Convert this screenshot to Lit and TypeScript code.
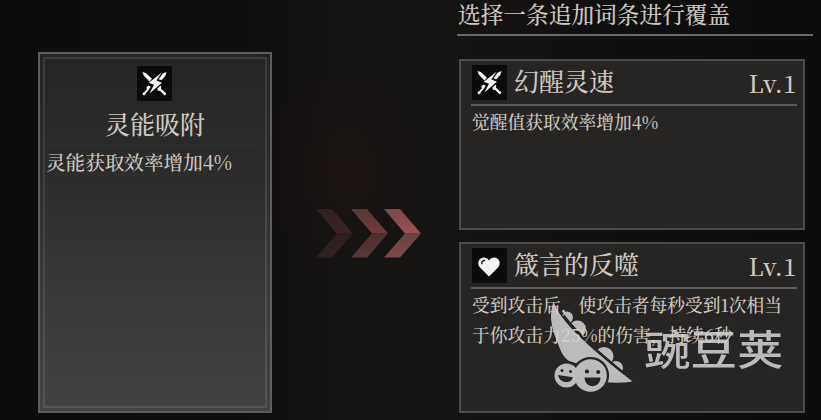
import { LitElement, css, html, svg } from "lit";
import { customElement, property } from "lit/decorators.js";

const swords = svg`
  <path d="M5.4 6 L8.8 7 L15 12.8 L12.4 15.4 L6.8 9.4 Z" />
  <path d="M29.6 6 L28.4 9.8 L24.4 14.2 L21.6 13.2 L25.8 7.6 Z" />
  <path d="M24.6 6.8 L11.8 16.8 L17 18.8 L12.4 27.6 L25 16.8 L19.4 14.6 Z" />
  <path d="M20.4 22.6 L23.4 19.8 L24.2 20.4 L24 22.8 L28 26.2 A1.5 1.5 0 1 1 26.2 28 L23 24.8 L21 25 Z" />
  <path d="M11.2 19.6 L13.8 20.8 L11.4 24.2 L8.6 27.4 A1.5 1.5 0 1 1 7 26.2 L9.8 23.4 L9.4 21.2 Z" />
`;

const heart = svg`
  <path d="M17 28.4 L8.2 19.8 C3.8 14.6 7.8 8.8 12.4 9.5 C14.6 9.8 16.1 11 17 12.4 C17.9 11 19.4 9.8 21.6 9.5 C26.2 8.8 30.2 14.6 25.8 19.8 Z" />
  <path class="shine" d="M9.8 16.2 C9.5 13.6 11 12.2 13.2 12.4" />
`;

@customElement("entry-icon")
export class EntryIcon extends LitElement {
  static styles = css`
    :host {
      display: block;
      width: 35px;
      height: 35px;
      background: #0b0b0b;
    }

    svg {
      display: block;
      fill: #f4f4f4;
    }

    .shine {
      fill: none;
      stroke: #0b0b0b;
      stroke-width: 1.3;
    }
  `;

  @property()
  name: string = "swords";

  render() {
    return html`
      <svg width="35" height="35" viewBox="0 0 35 35">
        ${this.name === "heart" ? heart : swords}
      </svg>
    `;
  }
}

@customElement("entry-card")
export class EntryCard extends LitElement {
  static styles = css`
    :host {
      display: block;
      box-sizing: border-box;
      border: 2px solid #4c4b4a;
      background: #272524;
      padding: 4px 6px 0 10px;
    }

    .head {
      display: flex;
      height: 41px;
      box-sizing: border-box;
      border-bottom: 2px solid #5d5b59;
    }

    .head entry-icon {
      margin-left: 1px;
    }

    .title {
      flex: 1;
      margin-left: 7px;
      font-size: 25px;
      line-height: 31px;
    }

    .level {
      font-size: 24px;
      line-height: 35px;
      letter-spacing: 0.5px;
    }

    .text {
      padding: 1px 0 0 1px;
      font-size: 17.75px;
      line-height: 30px;
      white-space: nowrap;
    }
  `;

  @property()
  icon: string = "swords";
  @property()
  heading: string = "";

  render() {
    return html`
      <div class="head">
        <entry-icon name=${this.icon}></entry-icon>
        <div class="title">${this.heading}</div>
        <div class="level">Lv.1</div>
      </div>
      <div class="text"><slot></slot></div>
    `;
  }
}

@customElement("app-root")
export class AppRoot extends LitElement {
  static styles = css`
    :host {
      display: block;
      position: relative;
      width: 821px;
      height: 420px;
      overflow: hidden;
      color: #cdc7bf;
      font-family: "Noto Serif CJK SC", "Noto Sans CJK SC", serif;
      font-weight: 500;
      background: radial-gradient(
          ellipse 80px 100px at 340px 170px,
          rgba(40, 22, 16, 0.3),
          transparent
        ),
        linear-gradient(
          90deg,
          #0d0c0d 0,
          #100e0e 30%,
          #161314 42%,
          #161313 52%,
          #100f0f 75%,
          #0d0c0d 100%
        );
    }

    .page {
      display: grid;
      grid-template-columns: 234px 106px 356px;
      column-gap: 44px;
      padding-left: 38px;
      height: 100%;
    }

    .current {
      margin-top: 52px;
      height: 361px;
      box-sizing: border-box;
      border: 2px solid #5e5e5e;
      padding: 3px;
      background: linear-gradient(#252525, #2b2b2b 30%, #383838 65%, #424242);
    }

    .inner {
      height: 100%;
      box-sizing: border-box;
      border: 2px solid rgba(255, 255, 255, 0.1);
      display: flex;
      flex-direction: column;
      align-items: center;
      padding-top: 7px;
    }

    .inner entry-icon {
      margin-left: -1px;
    }

    .name {
      margin-top: 5px;
      font-size: 25px;
      line-height: 35px;
    }

    .effect {
      align-self: stretch;
      margin: 4px 2px 0 1px;
      border-top: 1px solid #303030;
      font-size: 19.6px;
      line-height: 32px;
      white-space: nowrap;
    }

    .arrows {
      align-self: start;
      margin-top: 209px;
    }

    .choices {
      display: flex;
      flex-direction: column;
      margin-left: -9px;
    }

    .prompt {
      width: 356px;
      height: 36px;
      box-sizing: border-box;
      border-bottom: 2px solid #6c6a68;
      padding-left: 1px;
      font-size: 22.7px;
      line-height: 27px;
      white-space: nowrap;
    }

    entry-card {
      width: 346px;
      height: 171px;
      margin: 23px 0 0 2px;
    }

    entry-card + entry-card {
      margin-top: 12px;
    }

    .mark {
      position: absolute;
      left: 545px;
      top: 297px;
      width: 245px;
      height: 100px;
      color: rgba(212, 212, 214, 0.86);
    }

    .mark svg {
      position: absolute;
      left: 0;
      top: 0;
    }

    .brand {
      position: absolute;
      left: 99px;
      top: 25px;
      font-family: "Noto Sans CJK SC", sans-serif;
      font-size: 46.5px;
      font-weight: 500;
      line-height: 52px;
      white-space: nowrap;
      transform: scaleY(0.87);
    }
  `;

  renderArrows() {
    return html`
      <svg class="arrows" width="106" height="49" viewBox="0 0 106 49">
        <defs>
          <linearGradient id="upper" x1="0" y1="0" x2="0" y2="1">
            <stop offset="0" stop-color="#79494b" />
            <stop offset="1" stop-color="#a05055" />
          </linearGradient>
          <linearGradient id="lower" x1="0" y1="0" x2="0" y2="1">
            <stop offset="0" stop-color="#6b4142" />
            <stop offset="1" stop-color="#7b4b4c" />
          </linearGradient>
        </defs>
        ${[
          [0, 0.25],
          [35, 0.65],
          [68, 1],
        ].map(
          ([x, opacity]) => svg`
            <g transform="translate(${x} 0)" opacity=${opacity}>
              <path d="M0 0 H16 L37 24.5 H21 Z" fill="url(#upper)" />
              <path d="M21 24.5 H37 L16 48.5 H0 Z" fill="url(#lower)" />
            </g>
          `
        )}
      </svg>
    `;
  }

  renderMark() {
    return html`
      <div class="mark">
        <svg width="100" height="100" viewBox="545 297 100 100">
          <defs>
            <mask id="peas">
              <g fill="#fff">
                <circle cx="567" cy="317.5" r="6" />
                <circle cx="577.5" cy="329" r="8.5" />
                <circle cx="604" cy="356.5" r="9.5" />
                <circle cx="616" cy="368" r="7" />
              </g>
              <path
                d="M553 300 C563 321 588 346 634 382 L600 384 L550 340 Z"
                fill="#000"
                stroke="#000"
                stroke-width="3.6"
              />
            </mask>
            <mask id="pod">
              <rect x="545" y="297" width="100" height="100" fill="#fff" />
              <circle cx="566.5" cy="375.5" r="14.2" fill="#000" />
              <circle cx="590.5" cy="375.5" r="18.6" fill="#000" />
            </mask>
            <mask id="faces">
              <g fill="#fff">
                <circle cx="566.5" cy="375.5" r="12" />
                <circle cx="590.5" cy="375.5" r="16.3" />
              </g>
              <g fill="#000">
                <circle cx="562" cy="370.5" r="1.5" />
                <circle cx="570.5" cy="371.5" r="1.5" />
                <path d="M558.2 375 L572.8 377.2 C571.5 384.5 559 383.5 558.2 375 Z" />
                <circle cx="587" cy="371.5" r="2.1" />
                <circle cx="598.2" cy="372" r="2.1" />
                <path d="M584.5 377.5 H600.5 C600 389 585 389 584.5 377.5 Z" />
              </g>
            </mask>
          </defs>
          <g fill="currentColor">
            <rect x="545" y="297" width="100" height="100" mask="url(#peas)" />
            <path
              mask="url(#pod)"
              d="M553.5 301.5 C560 321 586 345 632.5 381.5 C624 383 613 383 604 382 L585 366 L569 361 C563 357 560 350 557 341 C551 328 549 314 553.5 301.5 Z"
            />
            <rect x="545" y="297" width="100" height="100" mask="url(#faces)" />
          </g>
        </svg>
        <div class="brand">豌豆荚</div>
      </div>
    `;
  }

  render() {
    return html`
      <div class="page">
        <div class="current">
          <div class="inner">
            <entry-icon></entry-icon>
            <div class="name">灵能吸附</div>
            <div class="effect">灵能获取效率增加4%</div>
          </div>
        </div>
        ${this.renderArrows()}
        <div class="choices">
          <div class="prompt">选择一条追加词条进行覆盖</div>
          <entry-card heading="幻醒灵速">觉醒值获取效率增加4%</entry-card>
          <entry-card icon="heart" heading="箴言的反噬">
            受到攻击后，使攻击者每秒受到1次相当<br />
            于你攻击力25%的伤害，持续6秒
          </entry-card>
        </div>
      </div>
      ${this.renderMark()}
    `;
  }
}
